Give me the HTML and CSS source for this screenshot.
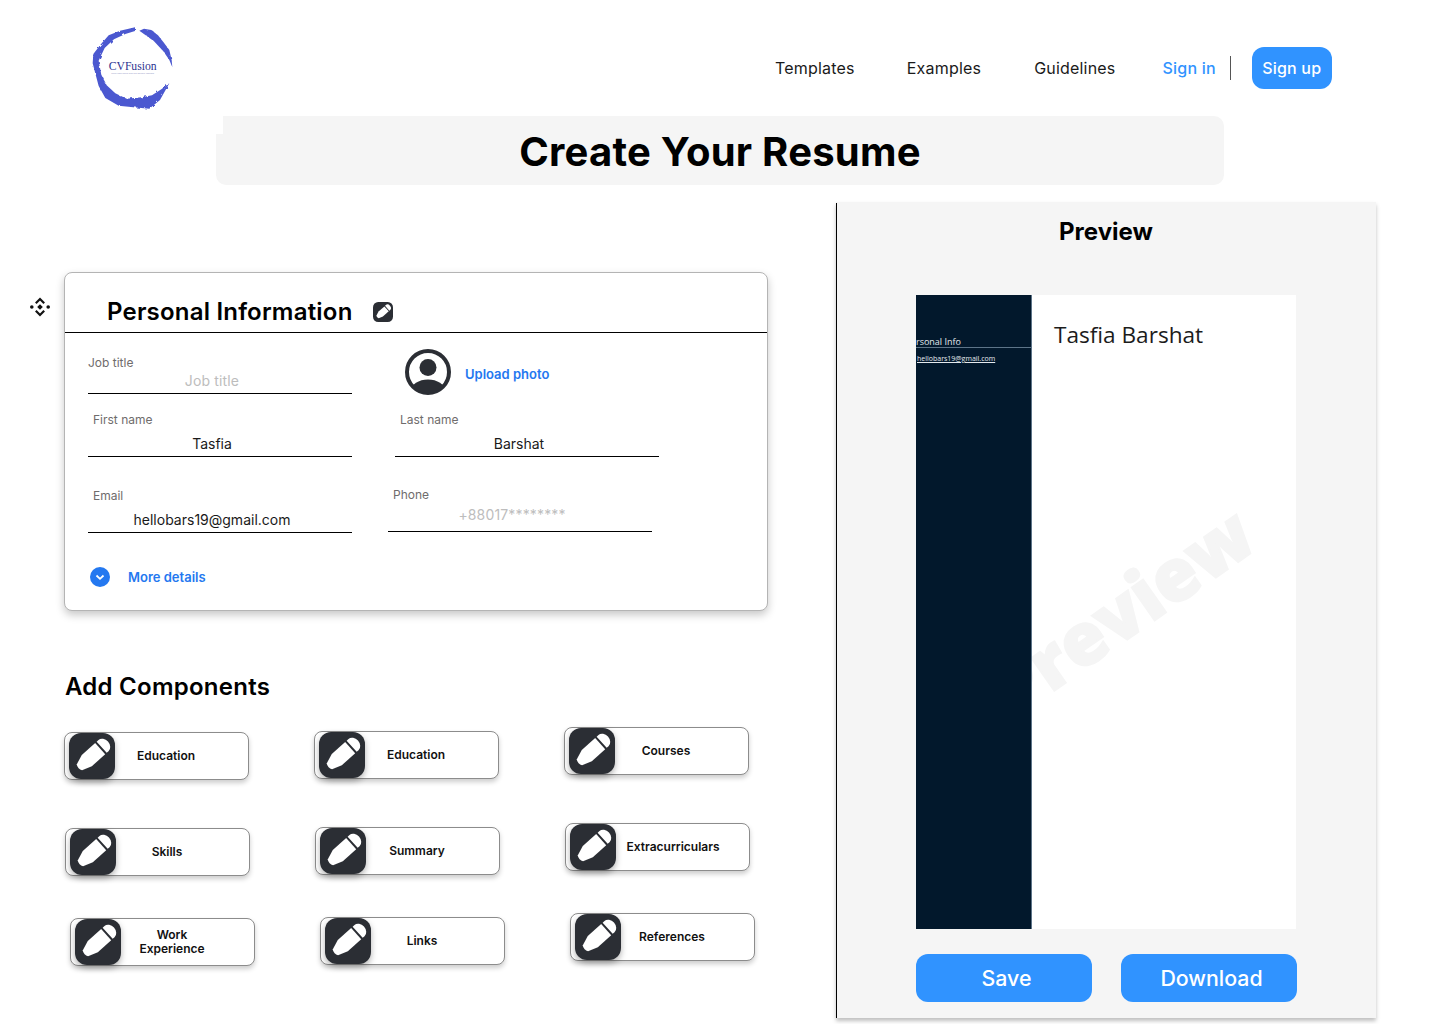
FILE: index.html
```html
<!DOCTYPE html>
<html lang="en">
<head>
<meta charset="utf-8">
<title>Create Your Resume</title>
<link rel="stylesheet" href="styles.css">
</head>
<body>
<svg class="sprites" aria-hidden="true">
  <symbol id="pencil" viewBox="0 0 46 46">
    <rect width="46" height="46" rx="12" fill="#2b2e34"/>
    <g transform="rotate(48 23 23)" fill="#fff">
      <path d="M15.500 10 V7.500 a7.500 6 0 0 1 15 0 V10 Z"/>
      <path d="M15.500 12 H30.500 V30 L27 40 Q23 42 19 40 L15.500 30 Z"/>
    </g>
  </symbol>
  <filter id="rough" x="-10%" y="-10%" width="120%" height="120%">
    <feTurbulence type="fractalNoise" baseFrequency="0.09" numOctaves="2" seed="4"/>
    <feDisplacementMap in="SourceGraphic" scale="9"/>
  </filter>
</svg>

<header class="topbar">
  <svg class="logo" viewBox="60 45 255 255" role="img" aria-label="CVFusion">
    <g class="logo-ring">
      <path d="M208 62 L222 56 L244 60 L264 76 L280 96 L298 120 L305 150 L307 172 L298 150 L280 124 L252 94 L226 75 Z"/>
      <path d="M195 52 L176 56 L150 62 L116 76 L90 106 L70 132 L68 160 L78 198 L86 228 L106 264 L146 287 L190 292 L238 296 L270 270 L298 220 L274 238 L246 256 L214 262 L170 266 L136 250 L110 226 L94 194 L86 152 L104 114 L132 88 L166 72 L195 63 Z"/>
    </g>
    <text class="logo-name" x="188" y="180" text-anchor="middle">CVFusion</text>
    <text class="logo-tag" x="188" y="191" text-anchor="middle">Turn your skills into the perfect resume</text>
  </svg>
  <nav class="nav">
    <a class="nav-link nav-templates">Templates</a>
    <a class="nav-link nav-examples">Examples</a>
    <a class="nav-link nav-guidelines">Guidelines</a>
    <a class="nav-signin">Sign in</a>
    <span class="nav-divider"></span>
    <a class="nav-signup">Sign up</a>
  </nav>
</header>

<div class="title-band">
  <h1 class="page-title">Create Your Resume</h1>
</div>

<main class="workspace">
  <section class="editor">
    <div class="personal-row">
      <svg class="drag-icon" viewBox="0 0 20 20" aria-hidden="true">
        <path d="M5.800 6.200 L10 2 L14.200 6.200 M5.800 13.800 L10 18 L14.200 13.800" fill="none" stroke="#111" stroke-width="2.200"/>
        <path d="M10 7.200 L12.800 10 L10 12.800 L7.200 10 Z"/>
        <circle cx="1.800" cy="10" r="1.800"/>
        <circle cx="18.200" cy="10" r="1.800"/>
      </svg>
      <div class="card">
        <div class="card-head">
          <h2 class="card-title">Personal Information</h2>
          <svg class="card-edit"><use href="#pencil"/></svg>
        </div>
        <div class="form-row form-row-job">
          <div class="field field-job">
            <label class="field-label">Job title</label>
            <div class="field-value is-placeholder">Job title</div>
          </div>
          <div class="upload">
            <svg class="avatar" viewBox="0 0 46 46" aria-hidden="true">
              <defs><clipPath id="avatar-clip"><circle cx="23" cy="23" r="21"/></clipPath></defs>
              <circle cx="23" cy="23" r="21" fill="none" stroke="#2b2e34" stroke-width="4"/>
              <circle cx="23" cy="18.500" r="8.500" fill="#2b2e34"/>
              <ellipse cx="23" cy="42" rx="17" ry="11.500" fill="#2b2e34" clip-path="url(#avatar-clip)"/>
            </svg>
            <a class="link-strong">Upload photo</a>
          </div>
        </div>
        <div class="form-row form-row-name">
          <div class="field field-tall">
            <label class="field-label indent">First name</label>
            <div class="field-value">Tasfia</div>
          </div>
          <div class="field field-tall field-last">
            <label class="field-label indent">Last name</label>
            <div class="field-value">Barshat</div>
          </div>
        </div>
        <div class="form-row form-row-contact">
          <div class="field field-tall">
            <label class="field-label indent">Email</label>
            <div class="field-value">hellobars19@gmail.com</div>
          </div>
          <div class="field field-phone">
            <label class="field-label indent">Phone</label>
            <div class="field-value is-placeholder">+88017********</div>
          </div>
        </div>
        <div class="more">
          <svg class="more-icon" viewBox="0 0 20 20" aria-hidden="true">
            <circle cx="10" cy="10" r="10" fill="#2478f0"/>
            <path d="M6.500 8.500 L10 11.800 L13.500 8.500" fill="none" stroke="#fff" stroke-width="1.800"/>
          </svg>
          <a class="link-strong">More details</a>
        </div>
      </div>
    </div>

    <h2 class="components-title">Add Components</h2>
    <div class="components">
      <div class="chip-col chip-col-1">
        <div class="chip"><svg class="chip-icon"><use href="#pencil"/></svg><span class="chip-label">Education</span></div>
        <div class="chip step-1"><svg class="chip-icon"><use href="#pencil"/></svg><span class="chip-label">Skills</span></div>
        <div class="chip step-2"><svg class="chip-icon"><use href="#pencil"/></svg><span class="chip-label chip-label-stack">Work Experience</span></div>
      </div>
      <div class="chip-col chip-col-2">
        <div class="chip"><svg class="chip-icon"><use href="#pencil"/></svg><span class="chip-label">Education</span></div>
        <div class="chip step-1"><svg class="chip-icon"><use href="#pencil"/></svg><span class="chip-label">Summary</span></div>
        <div class="chip step-2"><svg class="chip-icon"><use href="#pencil"/></svg><span class="chip-label">Links</span></div>
      </div>
      <div class="chip-col chip-col-3">
        <div class="chip"><svg class="chip-icon"><use href="#pencil"/></svg><span class="chip-label">Courses</span></div>
        <div class="chip step-1"><svg class="chip-icon"><use href="#pencil"/></svg><span class="chip-label chip-label-wide">Extracurriculars</span></div>
        <div class="chip step-2"><svg class="chip-icon"><use href="#pencil"/></svg><span class="chip-label">References</span></div>
      </div>
    </div>
  </section>

  <aside class="preview">
    <h2 class="preview-title">Preview</h2>
    <div class="paper">
      <div class="paper-side">
        <div class="side-heading"><span class="side-heading-text">Personal Info</span></div>
        <div class="side-email">hellobars19@gmail.com</div>
      </div>
      <div class="paper-main">
        <div class="paper-watermark">Preview</div>
        <div class="paper-name">Tasfia Barshat</div>
      </div>
    </div>
    <div class="preview-actions">
      <button class="action-btn">Save</button>
      <button class="action-btn">Download</button>
    </div>
  </aside>
</main>
</body>
</html>
```
FILE: styles.css
```css
* { box-sizing: border-box; }
html, body { margin: 0; padding: 0; }
body {
  width: 1440px;
  height: 1024px;
  overflow: hidden;
  background: #fff;
  color: #000;
  font-family: Inter, "Liberation Sans", sans-serif;
}
.sprites { position: absolute; width: 0; height: 0; }
h1, h2 { margin: 0; }

/* header */
.topbar {
  height: 116px;
  display: flex;
  padding: 25px 0 0 90px;
}
.logo { width: 85px; height: 85px; flex: none; }
.logo-ring { fill: #4c59d0; filter: url(#rough); }
.logo-name { font-family: "Liberation Serif", serif; font-size: 35px; fill: #2c3390; }
.logo-tag { font-family: "Open Sans", sans-serif; font-size: 7px; fill: #8a8ec0; }
.nav {
  display: flex;
  align-items: center;
  height: 42px;
  margin: 22px 0 0 600px;
  font-size: 16px;
  line-height: 20px;
  letter-spacing: .2px;
}
.nav-link { color: #1a1a1a; }
.nav-examples { margin-left: 52px; }
.nav-guidelines { margin-left: 53px; }
.nav-signin { margin-left: 47px; color: #3093ff; font-weight: 500; }
.nav-divider { width: 1px; height: 24px; margin-left: 14px; background: #555; }
.nav-signup {
  margin-left: 21px;
  width: 80px;
  height: 42px;
  border-radius: 12px;
  background: #3093ff;
  color: #fff;
  font-weight: 500;
  line-height: 42px;
  text-align: center;
}

/* title */
.title-band {
  position: relative;
  width: 1008px;
  height: 69px;
  margin-left: 216px;
  background: #f5f5f5;
  border-radius: 0 10px 10px 10px;
  text-align: center;
}
.title-band::before {
  content: "";
  position: absolute;
  left: 0;
  top: 0;
  width: 7px;
  height: 18px;
  background: #fff;
}
.page-title {
  font-size: 40px;
  font-weight: 700;
  line-height: 72px;
  letter-spacing: .25px;
}

/* layout */
.workspace {
  display: flex;
  margin-top: 17px;
}
.editor { width: 836px; padding: 70px 0 0 30px; flex: none; }
.personal-row { display: flex; align-items: flex-start; }
.drag-icon { width: 20px; height: 20px; margin: 25px 14px 0 0; flex: none; fill: #111; }

/* personal card */
.card {
  width: 704px;
  height: 339px;
  background: #fff;
  border: 1px solid #b4b4b4;
  border-radius: 8px;
  box-shadow: 0 4px 8px rgba(0, 0, 0, .22);
  flex: none;
}
.card-head {
  height: 60px;
  display: flex;
  align-items: center;
  padding: 18px 0 0 42px;
  border-bottom: 1px solid #000;
}
.card-title { font-size: 24px; font-weight: 600; line-height: 42px; letter-spacing: .2px; }
.card-edit { width: 20px; height: 20px; margin: 1px 0 0 20px; }
.form-row { display: flex; align-items: flex-start; padding-left: 23px; }
.form-row-job { height: 61px; padding-top: 22px; }
.form-row-name { height: 76px; padding-top: 18px; }
.form-row-contact { height: 54px; padding-top: 18px; }
.field { width: 264px; flex: none; border-bottom: 1px solid #000; }
.field-job { height: 39px; }
.field-tall { height: 45px; }
.field-last { margin-left: 43px; }
.field-phone { height: 45px; margin: -1px 0 0 36px; }
.field-label {
  display: block;
  font-size: 12px;
  line-height: 16px;
  color: #6f6c6c;
}
.indent { padding-left: 5px; }
.field-value {
  font-size: 14px;
  line-height: 20px;
  margin-top: 6px;
  padding-right: 16px;
  text-align: center;
  color: #1a1a1a;
}
.field-job .field-value { margin-top: 0; }
.field-phone .field-value { margin-top: 2px; }
.is-placeholder { color: #bdbdbd; letter-spacing: .15px; }
.upload { display: flex; align-items: center; margin: -6px 0 0 53px; }
.avatar { width: 46px; height: 46px; flex: none; }
.link-strong { font-size: 13px; font-weight: 600; line-height: 16px; color: #2478f0; }
.upload .link-strong { margin: 3px 0 0 14px; }
.more { display: flex; align-items: center; padding: 43px 0 0 25px; }
.more-icon { width: 20px; height: 20px; flex: none; margin-right: 18px; }

/* components */
.components-title {
  margin: 61px 0 0 35px;
  font-size: 24px;
  font-weight: 600;
  line-height: 30px;
  letter-spacing: .25px;
}
.components { display: flex; padding-left: 34px; }
.chip-col { width: 250px; flex: none; }
.chip-col-1 { padding-top: 30px; }
.chip-col-2 { padding-top: 29px; }
.chip-col-3 { padding-top: 25px; }
.chip {
  display: flex;
  align-items: center;
  width: 185px;
  height: 48px;
  background: #fff;
  border: 1px solid #8c8c8c;
  border-radius: 8px;
  box-shadow: 0 3px 5px rgba(0, 0, 0, .2);
}
.step-1 { margin: 48px 0 0 1px; }
.step-2 { margin: 42px 0 0 6px; }
.chip-icon {
  width: 46px;
  height: 46px;
  margin-left: 4px;
  flex: none;
  filter: drop-shadow(0 3px 3px rgba(0, 0, 0, .3));
}
.chip-label {
  width: 102px;
  font-size: 12px;
  font-weight: 600;
  line-height: 14px;
  text-align: center;
  color: #111;
}
.chip-label-wide { width: 114px; }
.chip-label-stack { padding: 0 16px; }

/* preview */
.preview {
  width: 540px;
  height: 816px;
  flex: none;
  background: #f5f5f5;
  padding: 15px 0 0 80px;
  box-shadow: 0 3px 4px rgba(0, 0, 0, .25);
}
.preview::before {
  content: "";
  position: absolute;
  left: 836px;
  top: 203px;
  width: 1px;
  height: 815px;
  background: #000;
}
.preview-title {
  width: 380px;
  font-size: 24px;
  font-weight: 700;
  line-height: 30px;
  text-align: center;
}
.paper {
  display: flex;
  width: 380px;
  height: 634px;
  margin-top: 48px;
  background: #fff;
  overflow: hidden;
}
.paper-side {
  width: 116px;
  flex: none;
  background: #02182c;
  border-right: 1px solid #5d7488;
  padding-top: 40px;
  overflow: hidden;
  font-family: "Open Sans", sans-serif;
  color: #e4e9ee;
}
.side-heading {
  height: 13px;
  border-bottom: 1px solid #5d7488;
  font-size: 9px;
  line-height: 13px;
  white-space: nowrap;
}
.side-heading-text { display: block; margin-left: -10.500px; }
.side-email {
  margin: 6px 0 0 1px;
  font-size: 7px;
  line-height: 10px;
  text-decoration: underline;
  white-space: nowrap;
}
.paper-main { position: relative; flex: 1; overflow: hidden; }
.paper-name {
  position: relative;
  padding: 23px 0 0 22px;
  font-family: "Open Sans", sans-serif;
  font-size: 22.600px;
  line-height: 33px;
  color: #1c1c1c;
}
.paper-watermark {
  position: absolute;
  left: -62px;
  top: 270px;
  font-family: "Open Sans", sans-serif;
  font-size: 72px;
  font-weight: 800;
  line-height: 90px;
  color: #f5f5f5;
  -webkit-text-stroke: 2px #f5f5f5;
  transform: rotate(-35deg);
  white-space: nowrap;
}
.preview-actions {
  display: flex;
  gap: 29px;
  margin-top: 25px;
}
.action-btn {
  width: 176px;
  height: 48px;
  padding: 0 0 0 5px;
  border: 0;
  border-radius: 12px;
  background: #3093ff;
  color: #fff;
  font-family: Inter, "Liberation Sans", sans-serif;
  font-size: 21.330px;
  font-weight: 500;
}
```
